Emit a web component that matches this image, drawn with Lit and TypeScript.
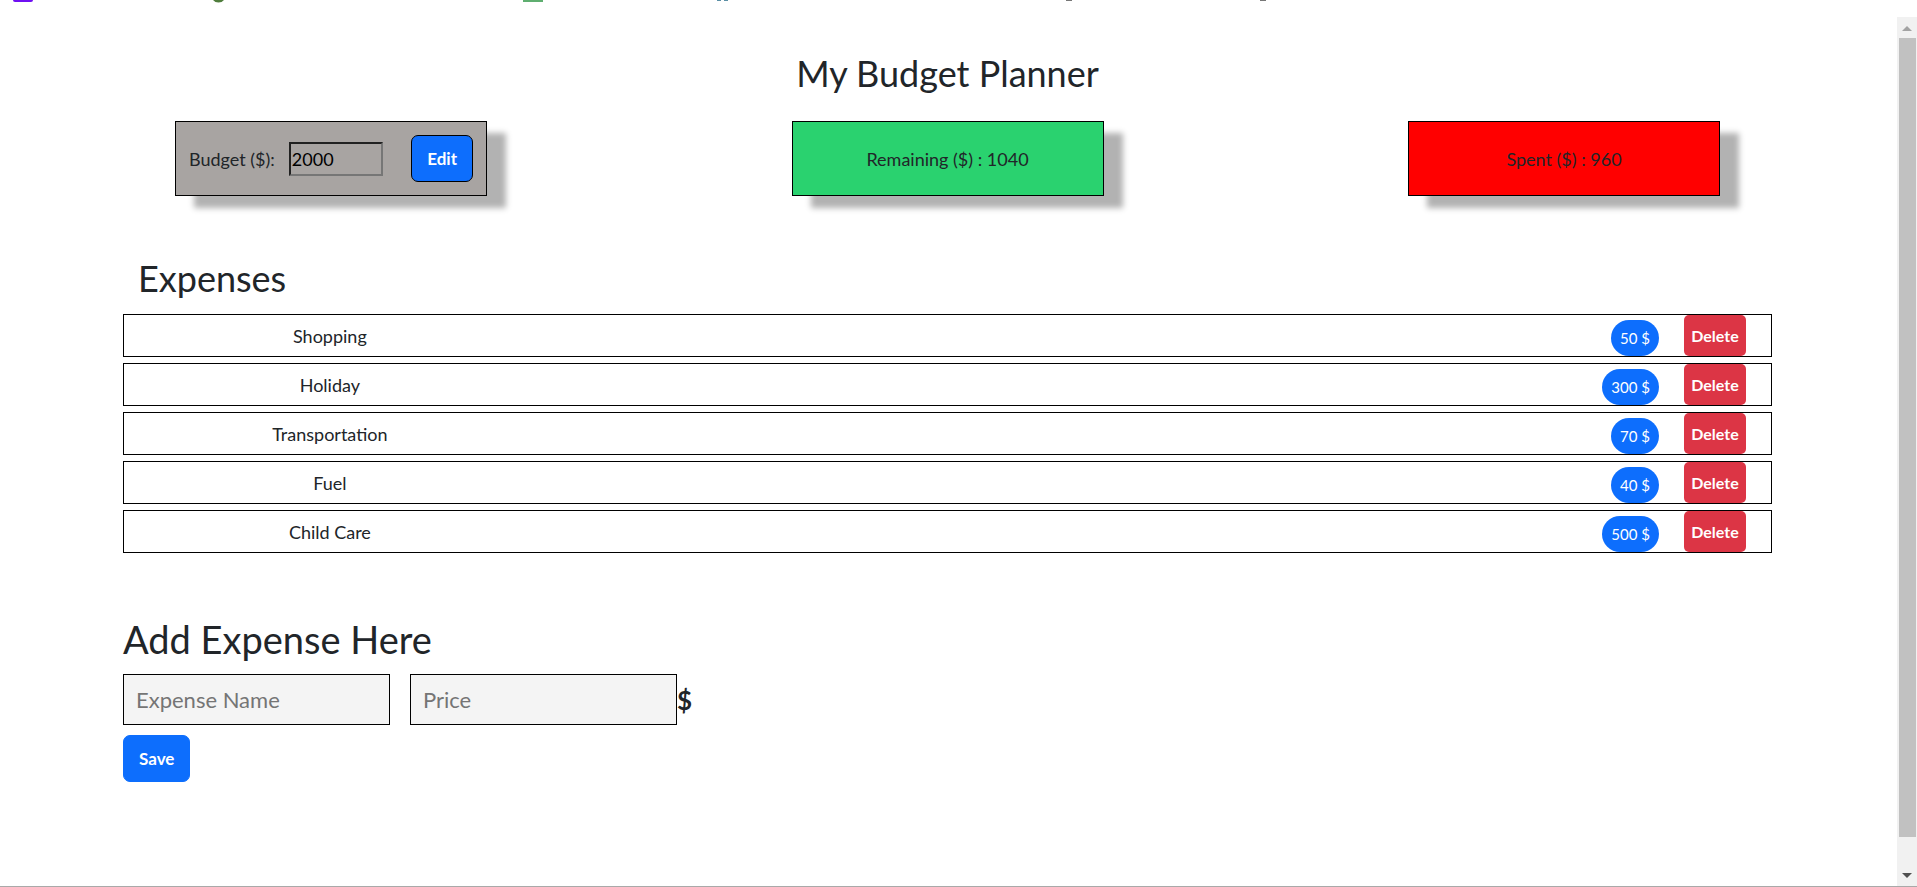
import { LitElement, html, css } from "lit";
import { customElement, state } from "lit/decorators.js";

interface Expense {
  name: string;
  amount: number;
}

@customElement("app-root")
export class AppRoot extends LitElement {
  @state() private budget = 2000;
  @state() private expenses: Expense[] = [
    { name: "Shopping", amount: 50 },
    { name: "Holiday", amount: 300 },
    { name: "Transportation", amount: 70 },
    { name: "Fuel", amount: 40 },
    { name: "Child Care", amount: 500 },
  ];

  static styles = css`
    :host {
      display: flex;
      flex-direction: column;
      height: 100vh;
      box-sizing: border-box;
      overflow: hidden;
      background: #fff;
      color: #212529;
      border-bottom: 1px solid #a9a9a9;
      font: 18px/28px "Gill Sans", "Gill Sans MT", Lato, sans-serif;
    }
    * { box-sizing: border-box; }
    button, input { font: inherit; margin: 0; }
    .strip { display: block; height: 17px; width: 100%; flex: none; }
    .view { flex: 1; min-height: 0; display: flex; }
    .page { flex: 1; padding: 32px 125px 0 123px; }
    h1, h2 { margin: 0; font-size: 36px; line-height: 48px; font-weight: 400; }
    h1 { text-align: center; }
    form h2 { font-size: 38px; }
    .cards {
      display: flex;
      justify-content: space-between;
      padding: 0 52px;
      margin-top: 24px;
    }
    .card {
      width: 312px;
      height: 75px;
      border: 1px solid #000;
      box-shadow: 19px 12px 6px #b2b2b2;
      display: flex;
      align-items: center;
      justify-content: center;
    }
    .budget { background: #a8a4a2; justify-content: space-between; padding: 0 13px; }
    .budget input {
      width: 94px;
      height: 34px;
      padding: 0 1px;
      border: 2px inset #767676;
      border-radius: 0;
      background: transparent;
      color: #000;
    }
    .field { display: flex; align-items: center; gap: 14px; }
    .remaining { background: #2ad26f; }
    .spent { background: #f00; }
    .btn {
      height: 47px;
      padding: 0 15px;
      border: 1px solid #0d6efd;
      border-radius: 7px;
      background: #0d6efd;
      color: #fff;
      font-size: 17px;
      font-weight: 700;
    }
    .edit { border-color: #000; }
    .expenses { margin-top: 58px; }
    .expenses h2 { padding-left: 15px; }
    ul { list-style: none; margin: 12px 0 0; padding: 0; display: grid; gap: 6px; }
    li {
      display: flex;
      align-items: center;
      height: 43px;
      border: 1px solid #000;
    }
    .name { width: 25%; text-align: center; }
    .badge {
      margin: 4px 25px 0 auto;
      height: 36px;
      padding: 0 9px;
      border-radius: 18px;
      background: #0d6efd;
      color: #fff;
      font-size: 15px;
      line-height: 36px;
    }
    .delete {
      width: 62px;
      height: 41px;
      margin-right: 25px;
      padding: 0;
      border: 0;
      border-radius: 5px;
      background: #dc3545;
      color: #fff;
      font-size: 16px;
      font-weight: 700;
    }
    form { margin-top: 62px; }
    .inputs { display: flex; align-items: center; margin-top: 11px; }
    .inputs input {
      width: 267px;
      height: 51px;
      padding: 0 12px;
      border: 1px solid #000;
      border-radius: 0;
      background: #f4f4f4;
      font-size: 22px;
    }
    .inputs input::placeholder { color: #757575; }
    .inputs .price { margin-left: 20px; }
    .unit { font-size: 26px; font-weight: 700; }
    .save { margin-top: 10px; }
    .scroll {
      width: 20px;
      background: #f1f1f1;
      display: flex;
      flex-direction: column;
      align-items: center;
    }
    .scroll svg { display: block; width: 18px; height: 21px; flex: none; }
    .thumb { width: 17px; flex: 0 1 92%; background: #c1c1c1; }
    .tail { flex: 1; }
  `;

  private get spent() {
    return this.expenses.reduce((sum, e) => sum + e.amount, 0);
  }

  private remove(expense: Expense) {
    this.expenses = this.expenses.filter((e) => e !== expense);
  }

  private save(event: Event) {
    event.preventDefault();
    const form = event.target as HTMLFormElement;
    const data = new FormData(form);
    const name = String(data.get("name") ?? "");
    const amount = Number(data.get("price"));
    if (!name || !amount) return;
    this.expenses = [...this.expenses, { name, amount }];
    form.reset();
  }

  render() {
    return html`
      <svg class="strip" aria-hidden="true">
        <path d="M13 0h20q0 2-2 2H15q-2 0-2-2z" fill="#6f10f2" />
        <path d="M213 0h11q-2 2.500-5.500 2.500T213 0z" fill="#4f7d3c" />
        <path d="M523 0h20v2h-20z" fill="#5fae70" />
        <path d="M717 0h4v1h-4zM724 0h4v1h-4z" fill="#5b8fa5" />
        <path d="M1066 0h6v1h-6zM1260 0h6v1h-6z" fill="#777" />
      </svg>
      <div class="view">
        <main class="page">
          <h1>My Budget Planner</h1>
          <section class="cards">
            <div class="card budget">
              <div class="field">
                <label for="budget">Budget ($):</label>
                <input id="budget" type="text" inputmode="numeric" .value=${String(this.budget)} />
              </div>
              <button class="btn edit" type="button">Edit</button>
            </div>
            <div class="card remaining">Remaining ($) : ${this.budget - this.spent}</div>
            <div class="card spent">Spent ($) : ${this.spent}</div>
          </section>
          <section class="expenses">
            <h2>Expenses</h2>
            <ul>
              ${this.expenses.map(
                (e) => html`<li>
                  <span class="name">${e.name}</span>
                  <span class="badge">${e.amount} $</span>
                  <button class="delete" type="button" @click=${() => this.remove(e)}>Delete</button>
                </li>`
              )}
            </ul>
          </section>
          <form @submit=${this.save}>
            <h2>Add Expense Here</h2>
            <div class="inputs">
              <input name="name" type="text" placeholder="Expense Name" aria-label="Expense Name" />
              <input class="price" name="price" type="text" placeholder="Price" aria-label="Price" />
              <span class="unit">$</span>
            </div>
            <button class="btn save" type="submit">Save</button>
          </form>
        </main>
        <div class="scroll" aria-hidden="true">
          <svg viewBox="0 0 18 21"><path d="M4 14l5-5 5 5z" fill="#a3a3a3" /></svg>
          <div class="thumb"></div>
          <div class="tail"></div>
          <svg viewBox="0 0 18 21"><path d="M4 8l5 5 5-5z" fill="#505050" /></svg>
        </div>
      </div>
    `;
  }
}
